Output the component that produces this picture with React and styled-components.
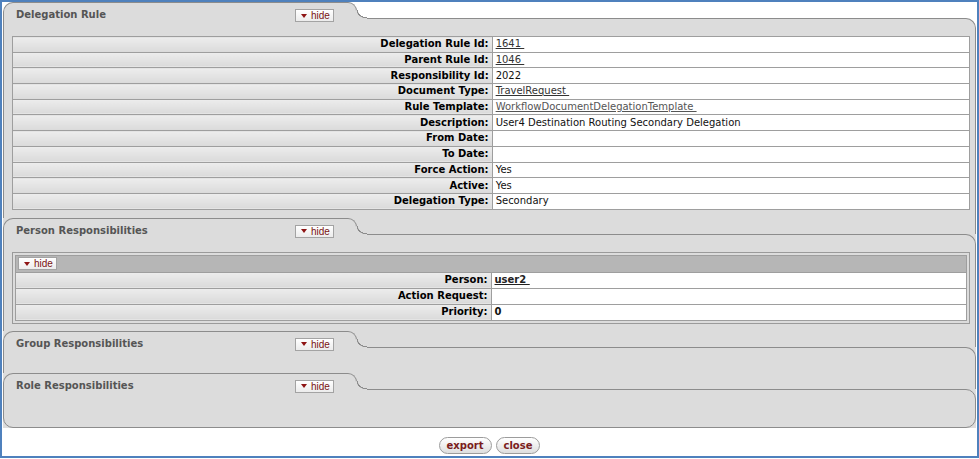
import React from 'react';
import styled, { createGlobalStyle } from 'styled-components';

const GlobalStyle = createGlobalStyle`
  html, body {
    margin: 0;
    padding: 0;
    background: #fff;
  }
  body {
    font-family: "DejaVu Sans", Verdana, sans-serif;
    font-size: 10px;
    color: #000;
  }
`;

const LINE = '#8c8c8c';
const PANEL = '#dcdcdc';

const Frame = styled.div`
  box-sizing: border-box;
  width: 979px;
  height: 458px;
  border: 2px solid #4f81bd;
  padding: 0 1px;
  background: #fff;
`;

const Panels = styled.div`
  display: flex;
  flex-direction: column;
`;

const Section = styled.div`
  background: ${(p) => (p.$first ? '#fff' : PANEL)};
`;

const Header = styled.div`
  box-sizing: border-box;
  display: flex;
  align-items: flex-start;
  height: 16px;
  border-right: ${(p) => (p.$first ? 'none' : `1px solid ${LINE}`)};
`;

const Tab = styled.div`
  position: relative;
  z-index: 1;
  box-sizing: border-box;
  display: flex;
  align-items: flex-start;
  width: 354px;
  height: 17px;
  padding: 6px 0 0 12px;
  background: ${PANEL};
  border: 1px solid ${LINE};
  border-bottom: 0;
  border-radius: 10px 9px 0 0;

  &::after {
    content: '';
    position: absolute;
    left: 100%;
    bottom: 0;
    width: 11px;
    height: 9px;
    background: radial-gradient(
      ellipse 10px 8px at 100% 0,
      transparent 90%,
      ${LINE} 92%,
      ${LINE} 102%,
      ${PANEL} 106%
    );
  }
`;

const Title = styled.div`
  flex: 0 0 279px;
  line-height: 12px;
  font-weight: bold;
  font-size: 10px;
  color: #555;
  white-space: nowrap;
`;

const HideButton = styled.button`
  box-sizing: border-box;
  display: inline-flex;
  align-items: center;
  gap: 4px;
  width: 39px;
  height: 13px;
  margin: ${(p) => p.$margin || '0'};
  padding: 0 0 0 5px;
  border: 1px solid #a3a3a3;
  background: linear-gradient(#ffffff, #ececec);
  color: #7a1212;
  font-family: "Liberation Sans", Arial, sans-serif;
  font-size: 10px;
  line-height: 11px;
  cursor: pointer;
`;

const Arrow = styled.span`
  width: 0;
  height: 0;
  border-left: 3.5px solid transparent;
  border-right: 3.5px solid transparent;
  border-top: 4px solid #8e1414;
`;

const Body = styled.div`
  background: ${PANEL};
  border: 1px solid ${LINE};
  border-bottom: ${(p) => (p.$last ? `1px solid ${LINE}` : '0')};
  border-radius: ${(p) => (p.$last ? '0 10px 10px 10px' : '0 10px 0 0')};
  padding: ${(p) => p.$pad || '0'};
  height: ${(p) => (p.$h ? `${p.$h}px` : 'auto')};
`;

const Table = styled.table`
  width: 100%;
  border-collapse: collapse;
  table-layout: fixed;
`;

const Row = styled.tr`
  height: ${(p) => p.$h || 15.7}px;
`;

const Label = styled.th`
  width: 49.7%;
  padding: 0 3px 0 0;
  border: 1px solid #9e9e9e;
  background: linear-gradient(#ededed, #dadada);
  text-align: right;
  font-weight: bold;
  font-size: 10px;
  line-height: 12px;
  color: #000;
  white-space: nowrap;
`;

const Value = styled.td`
  padding: 0 0 0 3px;
  border: 1px solid #9e9e9e;
  background: #fff;
  font-size: 10px;
  line-height: 12px;
  font-weight: ${(p) => (p.$bold ? 'bold' : 'normal')};
  color: #111;
  white-space: nowrap;
`;

const Link = styled.a`
  color: ${(p) => p.$color || '#333'};
  text-decoration: underline;
  font-weight: inherit;
`;

const Box = styled.div`
  border: 1px solid #9a9a9a;
  padding: 2px;
`;

const SubHead = styled.td`
  height: 16px;
  padding: 0 0 0 2px;
  background: #b6b6b6;
  border: 1px solid #9e9e9e;
  vertical-align: middle;
`;

const Footer = styled.div`
  display: flex;
  justify-content: center;
  gap: 4px;
  margin-top: 9px;
`;

const PillButton = styled.button`
  box-sizing: border-box;
  height: 17px;
  padding: 0 7px;
  border: 1px solid #9c9c9c;
  border-radius: 9px;
  background: linear-gradient(#ffffff, #dedede);
  color: #7a1c1c;
  font-family: "DejaVu Sans", Verdana, sans-serif;
  font-weight: bold;
  font-size: 10px;
  cursor: pointer;
`;

const Hide = ({ margin }) => (
  <HideButton $margin={margin}>
    <Arrow />
    hide
  </HideButton>
);

const Panel = ({ title, first, last, children, pad, h }) => (
  <Section $first={first}>
    <Header $first={first}>
      <Tab>
        <Title>{title}</Title>
        <Hide />
      </Tab>
    </Header>
    <Body $last={last} $pad={pad} $h={h}>
      {children}
    </Body>
  </Section>
);

const rule = [
  ['Delegation Rule Id:', <Link key="a">1641&nbsp;</Link>],
  ['Parent Rule Id:', <Link key="b">1046&nbsp;</Link>],
  ['Responsibility Id:', '2022'],
  ['Document Type:', <Link key="c">TravelRequest&nbsp;</Link>],
  ['Rule Template:', <Link key="d" $color="#555">WorkflowDocumentDelegationTemplate&nbsp;</Link>],
  ['Description:', 'User4 Destination Routing Secondary Delegation'],
  ['From Date:', ''],
  ['To Date:', ''],
  ['Force Action:', 'Yes'],
  ['Active:', 'Yes'],
  ['Delegation Type:', 'Secondary'],
];

const person = [
  ['Person:', <Link key="p" $color="#222">user2&nbsp;</Link>],
  ['Action Request:', ''],
  ['Priority:', '0'],
];

const App = () => (
  <>
    <GlobalStyle />
    <Frame>
      <Panels>
        <Panel title="Delegation Rule" first pad="17px 5px 8px 8px">
          <Table>
            <tbody>
              {rule.map(([label, value]) => (
                <Row key={label}>
                  <Label>{label}</Label>
                  <Value>{value}</Value>
                </Row>
              ))}
            </tbody>
          </Table>
        </Panel>
        <Panel title="Person Responsibilities" pad="17px 5px 7px 8px">
          <Box>
            <Table>
              <tbody>
                <tr>
                  <SubHead colSpan="2">
                    <Hide />
                  </SubHead>
                </tr>
                {person.map(([label, value]) => (
                  <Row key={label} $h={16}>
                    <Label>{label}</Label>
                    <Value $bold>{value}</Value>
                  </Row>
                ))}
              </tbody>
            </Table>
          </Box>
        </Panel>
        <Panel title="Group Responsibilities" h={25} />
        <Panel title="Role Responsibilities" last h={37} />
      </Panels>
      <Footer>
        <PillButton>export</PillButton>
        <PillButton>close</PillButton>
      </Footer>
    </Frame>
  </>
);

export default App;
